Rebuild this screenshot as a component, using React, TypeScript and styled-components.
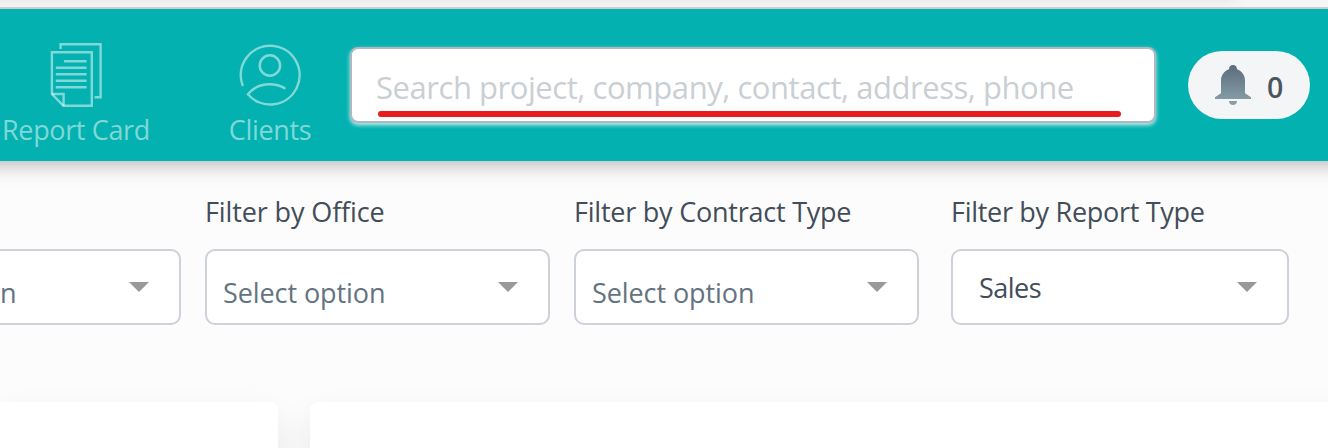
import React from "react";
import styled, { createGlobalStyle } from "styled-components";

const GlobalStyle = createGlobalStyle`
  * { box-sizing: border-box; }
  body {
    margin: 0;
    background: #fcfcfc;
    font-family: "Open Sans", "Noto Sans", sans-serif;
    overflow: hidden;
  }
`;

const Page = styled.div`
  width: 1328px;
  height: 448px;
  overflow: hidden;
  display: flex;
  flex-direction: column;
`;

const TopStrip = styled.div`
  flex: none;
  position: relative;
  z-index: 1;
  height: 9px;
  background: linear-gradient(90deg, transparent 1225px, #f6f6f6 1245px),
    linear-gradient(#ececec, #f4f4f4);
  border-bottom: 2px solid #cdcdcd;
`;

const Header = styled.header`
  flex: none;
  height: 152px;
  display: flex;
  align-items: flex-start;
  background: #02b1b0;
  box-shadow: 0 -18px 20px 20px rgba(0, 0, 0, 0.32);
`;

const NavItem = styled.a<{ $width: number }>`
  width: ${(p) => p.$width}px;
  padding-top: 34px;
  display: flex;
  flex-direction: column;
  align-items: center;
  color: #80d8d7;

  & + & {
    margin-left: 38px;
  }
`;

const Label = styled.span<{ $track: number }>`
  font-size: 27px;
  line-height: 36px;
  white-space: nowrap;
  letter-spacing: ${(p) => p.$track}px;
`;

const NavLabel = styled(Label)`
  margin-top: 5px;
`;

const SearchBox = styled.div`
  width: 806px;
  height: 76px;
  margin-top: 38px;
  padding: 18px 24px 0;
  display: flex;
  flex-direction: column;
  background: #fff;
  border: 2px solid #afb8c1;
  border-radius: 8px;
  box-shadow: 0 2px 4px rgba(255, 255, 255, 0.8);
`;

const Placeholder = styled.span`
  font-size: 31px;
  line-height: 40px;
  letter-spacing: -0.45px;
  white-space: nowrap;
  color: #c9cfd3;
`;

const Underline = styled.div`
  flex: none;
  width: 743px;
  height: 6px;
  margin: 4px 0 0 2px;
  border-radius: 3px;
  background: #e81c1c;
`;

const Alerts = styled.div`
  width: 122px;
  height: 68px;
  margin: 42px 0 0 32px;
  padding-left: 27px;
  display: flex;
  align-items: center;
  gap: 15px;
  border-radius: 34px;
  background: #f3f5f7;
`;

const Count = styled.span`
  font-size: 28.5px;
  font-weight: 600;
  line-height: 36px;
  color: #4a565d;
  padding-top: 3px;
`;

const Filters = styled.section`
  flex: none;
  display: flex;
  padding-top: 33px;
  gap: 24px;
  margin-left: -164px;
`;

const Field = styled.div<{ $width: number; $indent?: number }>`
  flex: none;
  width: ${(p) => p.$width}px;
  margin-left: ${(p) => p.$indent ?? 0}px;
  display: flex;
  flex-direction: column;
  gap: 19px;
  color: #424d59;
`;

const FieldLabel = styled(Label)`
  height: 36px;
`;

const Select = styled.div<{ $chosen?: boolean }>`
  height: 76px;
  display: flex;
  justify-content: space-between;
  padding: ${(p) => (p.$chosen ? "19px 30px 0 26px" : "24px 30px 0 16px")};
  background: #fff;
  border: 2px solid #cdd2d9;
  border-radius: 10px;
  color: ${(p) => (p.$chosen ? "#424d59" : "#637381")};
`;

const Caret = styled.span<{ $top: number }>`
  width: 0;
  height: 0;
  margin-top: ${(p) => p.$top}px;
  border: 10px solid transparent;
  border-top-color: #999;
  border-bottom: 0;
`;

const Panels = styled.main`
  flex: 1;
  display: flex;
  gap: 32px;
  padding-top: 77px;
`;

const Panel = styled.div<{ $width: number; $side: "left" | "right" }>`
  flex: none;
  width: ${(p) => p.$width}px;
  height: 120px;
  background: #fff;
  border-radius: ${(p) => (p.$side === "left" ? "0 8px 0 0" : "8px 0 0 0")};
  box-shadow: 0 16px 34px rgba(0, 0, 0, 0.09);
`;

const ReportIcon = () => (
  <svg width="52" height="64" viewBox="50.4 43 52 64" fill="none" stroke="#fff" strokeOpacity="0.5" strokeWidth="2.4">
    <path d="M61 49V44.3H101V97.2H95" />
    <path d="M63.7 105.7L52.3 94V52.2H92.2V105.7Z" />
    <path d="M52.3 94H64V105.7" />
    <path d="M64.3 61.3H87M56.2 67.8H87M56.2 74.3H87M56.2 80.8H87M56.2 87.3H87" />
  </svg>
);

const ClientsIcon = () => (
  <svg width="64" height="64" viewBox="238.100 43 64 64" fill="none" stroke="#80d8d7" strokeWidth="2.5" strokeLinecap="round" strokeLinejoin="round">
    <path d="M242.6 85A29.4 29.4 0 1 1 248 94.3Q256 84.3 270 84.3Q278 84.3 284.6 88.2" />
    <circle cx="270" cy="65.5" r="10.2" />
  </svg>
);

const BellIcon = () => (
  <svg width="37" height="40" viewBox="1215 65 37 40">
    <defs>
      <linearGradient id="bell" x1="0" y1="65" x2="0" y2="105" gradientUnits="userSpaceOnUse">
        <stop offset="0" stopColor="#5a6c7d" />
        <stop offset="1" stopColor="#8ba3aa" />
      </linearGradient>
    </defs>
    <path
      fill="url(#bell)"
      d="M1233 65C1230.500 65 1229 66.800 1229 69.300C1224 71.200 1221 75.500 1221 80.500V93.300L1215 97.300V99H1251V97.300L1245 93.300V80.500C1245 75.500 1242 71.200 1237 69.300C1237 66.800 1235.500 65 1233 65ZM1229 101H1237C1237 103.500 1235.300 105 1233 105S1229 103.500 1229 101Z"
    />
  </svg>
);

type Filter = {
  label: string;
  value: string;
  width: number;
  labelTrack: number;
  valueTrack: number;
  chosen?: boolean;
  indent?: number;
};

const filters: Filter[] = [
  { label: "", value: "Select option", width: 345, labelTrack: 0, valueTrack: -0.08 },
  { label: "Filter by Office", value: "Select option", width: 345, labelTrack: -0.12, valueTrack: -0.08 },
  { label: "Filter by Contract Type", value: "Select option", width: 345, labelTrack: -0.23, valueTrack: -0.08 },
  { label: "Filter by Report Type", value: "Sales", width: 338, labelTrack: -0.29, valueTrack: -0.5, chosen: true, indent: 8 },
];

export default function App() {
  return (
    <Page>
      <GlobalStyle />
      <TopStrip />
      <Header>
        <NavItem $width={152}>
          <ReportIcon />
          <NavLabel $track={-0.35}>Report Card</NavLabel>
        </NavItem>
        <NavItem $width={160}>
          <ClientsIcon />
          <NavLabel $track={-0.35}>Clients</NavLabel>
        </NavItem>
        <SearchBox>
          <Placeholder>Search project, company, contact, address, phone</Placeholder>
          <Underline />
        </SearchBox>
        <Alerts>
          <BellIcon />
          <Count>0</Count>
        </Alerts>
      </Header>
      <Filters>
        {filters.map((f, i) => (
          <Field key={i} $width={f.width} $indent={f.indent}>
            <FieldLabel $track={f.labelTrack}>{f.label}</FieldLabel>
            <Select $chosen={f.chosen}>
              <Label $track={f.valueTrack}>{f.value}</Label>
              <Caret $top={f.chosen ? 12 : 7} />
            </Select>
          </Field>
        ))}
      </Filters>
      <Panels>
        <Panel $width={278} $side="left" />
        <Panel $width={1060} $side="right" />
      </Panels>
    </Page>
  );
}
